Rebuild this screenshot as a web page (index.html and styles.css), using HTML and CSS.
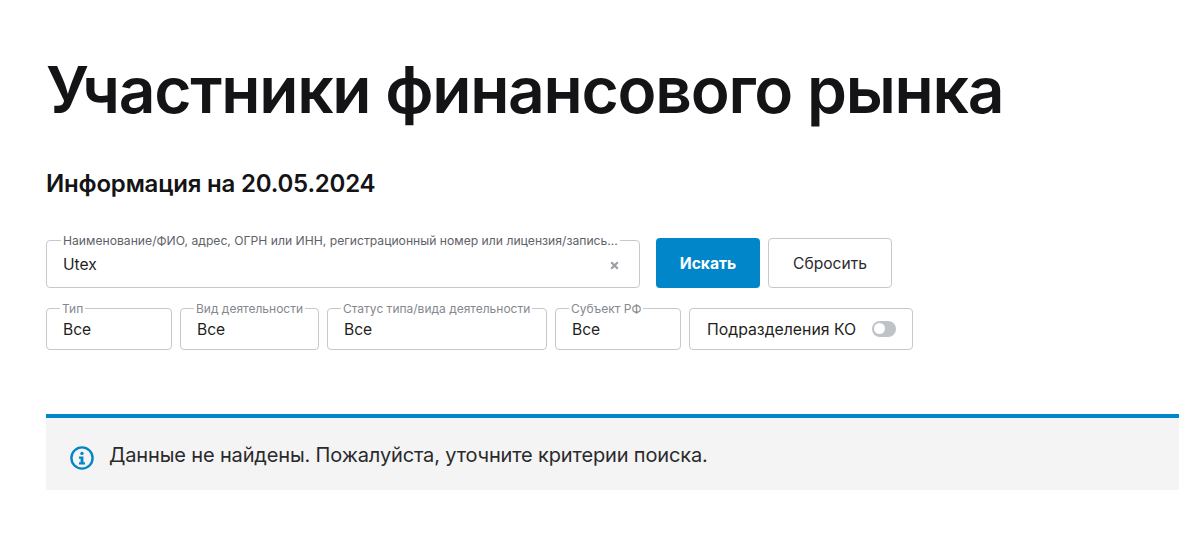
FILE: index.html
```html
<!DOCTYPE html>
<html lang="ru">
<head>
<meta charset="utf-8">
<title>Участники финансового рынка</title>
<link rel="stylesheet" href="styles.css">
</head>
<body>
<main class="page">
  <h1 class="title">Участники финансового рынка</h1>
  <h2 class="subtitle">Информация на 20.05.2024</h2>
  <div class="row row-search">
    <div class="field field-search">
      <span class="legend">Наименование/ФИО, адрес, ОГРН или ИНН, регистрационный номер или лицензия/запись...</span>
      <span class="value">Utex</span>
      <svg class="clear" width="9" height="9" viewBox="0 0 9 9"><path d="M1.2 1.2l6.6 6.6M7.8 1.2L1.2 7.8" stroke="#9a9ea6" stroke-width="2.2"/></svg>
    </div>
    <button class="btn btn-primary">Искать</button>
    <button class="btn btn-secondary">Сбросить</button>
  </div>
  <div class="row row-filters">
    <div class="field f-type"><span class="legend">Тип</span><span class="value">Все</span></div>
    <div class="field f-activity"><span class="legend">Вид деятельности</span><span class="value">Все</span></div>
    <div class="field f-status"><span class="legend">Статус типа/вида деятельности</span><span class="value">Все</span></div>
    <div class="field f-region"><span class="legend">Субъект РФ</span><span class="value">Все</span></div>
    <div class="field f-toggle"><span class="value">Подразделения КО</span><span class="toggle"><span class="knob"></span></span></div>
  </div>
  <div class="notice">
    <svg class="info" width="24" height="24" viewBox="0 0 24 24"><circle cx="12" cy="12" r="10.6" fill="none" stroke="#0086c9" stroke-width="2.4"/><circle cx="12" cy="7.4" r="1.7" fill="#0086c9"/><path d="M9 10.5h4.4v5.8H15v2.2H9v-2.2h1.6v-3.6H9z" fill="#0086c9"/></svg>
    <span class="notice-text">Данные не найдены. Пожалуйста, уточните критерии поиска.</span>
  </div>
</main>
</body>
</html>
```
FILE: styles.css
```css
* { box-sizing: border-box; }
html, body { margin: 0; padding: 0; background: #fff; }
body { font-family: "Inter", "Noto Sans", sans-serif; color: #1a1a1c; overflow: hidden; }
.page { padding: 52px 0 0 46px; height: 555px; }
.title { margin: 0; font-size: 64px; line-height: 76px; font-weight: 600; letter-spacing: -1.25px; color: #141416; white-space: nowrap; }
.subtitle { margin: 41px 0 0; font-size: 24px; line-height: 30px; font-weight: 600; letter-spacing: -0.2px; color: #141416; }
.row { display: flex; gap: 8px; }
.row-search { margin-top: 39px; height: 50px; padding-right: 287px; }
.row-filters { margin-top: 20px; height: 42px; }
.field { position: relative; display: flex; align-items: center; border: 1px solid #c6c8cc; border-radius: 4px; padding: 0 16px; background: #fff; }
.field-search { width: 594px; height: 48px; margin: 2px 8px 0 0; justify-content: space-between; padding-top: 2px; }
.legend { position: absolute; top: -7px; left: 13px; padding: 0 2px; background: #fff; font-size: 12px; line-height: 14px; color: #85888f; white-space: nowrap; }
.field-search .legend { left: 14px; color: #5f6269; font-size: 12.17px; max-width: 560px; }
.value { font-size: 15.6px; line-height: 20px; color: #1f1f22; white-space: nowrap; }
.row-filters .value { margin-top: 2px; }
.f-toggle .value { font-size: 15.8px; }
.clear { margin-right: 4px; }
.btn { height: 50px; border-radius: 4px; font-family: inherit; font-size: 15.6px; }
.btn-primary { width: 104px; border: 0; background: #0086c9; color: #fff; font-weight: 700; }
.btn-secondary { width: 124px; border: 1px solid #c6c8cc; background: #fff; color: #2a2a2d; }
.f-type { width: 126px; }
.f-activity { width: 139px; }
.f-status { width: 220px; }
.f-region { width: 126px; }
.f-toggle { width: 224px; padding-left: 17px; gap: 16px; }
.toggle { display: flex; align-items: center; width: 24px; height: 16px; padding: 0 0 0 2px; border-radius: 8px; background: #bfc2c7; margin-top: -1px; }
.knob { width: 11px; height: 11px; border-radius: 50%; background: #fff; }
.notice { display: flex; align-items: center; margin-top: 64px; height: 76px; padding: 0 0 0 24px; gap: 16px; border-top: 4px solid #0086c9; background: #f4f4f4; }
.info { margin-top: 8px; }
.notice-text { margin: 2px 0 0 -1px; font-size: 20px; line-height: 28px; letter-spacing: -0.15px; color: #2a2a2d; }
```
